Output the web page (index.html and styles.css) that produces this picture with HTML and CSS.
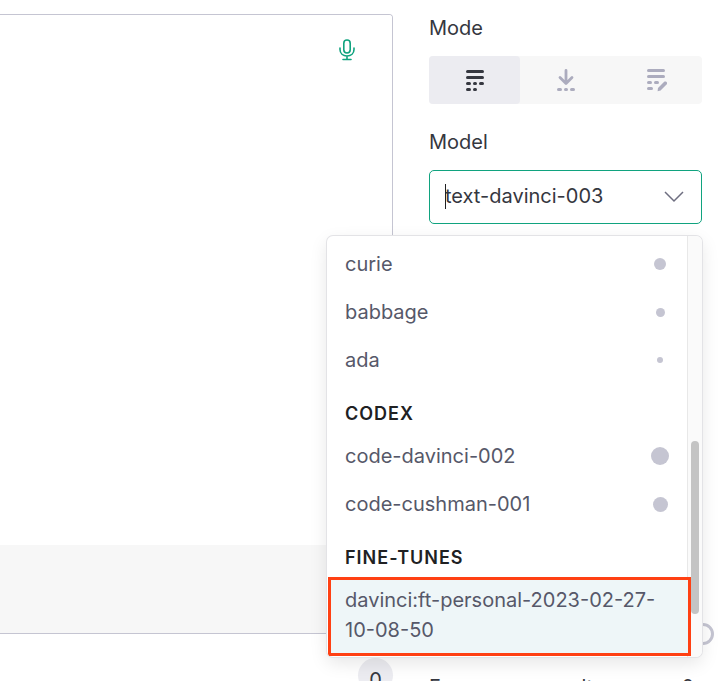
FILE: index.html
```html
<!DOCTYPE html>
<html lang="en">
<head>
<meta charset="utf-8">
<meta name="viewport" content="width=device-width, initial-scale=1">
<title>Playground</title>
<link rel="stylesheet" href="styles.css">
</head>
<body>
<div class="page">
  <main class="workspace">
    <div class="editor">
      <textarea class="prompt" aria-label="Prompt"></textarea>
      <button class="mic" type="button" aria-label="Record audio">
        <svg width="16" height="22" viewBox="0 0 16 22" fill="none" stroke="currentColor" stroke-width="1.6" stroke-linecap="round"><rect x="4.8" y="1" width="6.4" height="13" rx="3.2"/><path d="M1 9v1.500C1 14.500 4 17 8 17s7-2.500 7-6.500V9M8 17v3.500M4 20.500h8"/></svg>
      </button>
      <div class="editor-foot"></div>
    </div>
    <div class="count-row"><span class="count">0</span></div>
  </main>
  <aside class="settings">
    <h2 class="label">Mode</h2>
    <div class="modes">
      <button class="mode mode-active" type="button" aria-label="Complete">
        <svg width="18" height="22" viewBox="0 0 18 22" fill="currentColor"><rect y="1" width="18" height="3" rx="1.500"/><rect y="7" width="18" height="3" rx="1.500"/><rect y="13" width="5" height="3" rx="1.500"/><rect x="7" y="13" width="4" height="3" rx="1.500"/><rect x="13" y="13" width="5" height="3" rx="1.500"/><rect y="19" width="5" height="3" rx="1.500"/><rect x="7" y="19" width="4" height="3" rx="1.500"/></svg>
      </button>
      <button class="mode" type="button" aria-label="Insert">
        <svg width="18" height="22" viewBox="0 0 18 22" fill="currentColor"><path d="M9 1.500v12M3 8.500l6 6 6-6" fill="none" stroke="currentColor" stroke-width="2.800" stroke-linecap="round" stroke-linejoin="round"/><rect y="19" width="5" height="3" rx="1.500"/><rect x="7" y="19" width="4" height="3" rx="1.500"/><rect x="13" y="19" width="5" height="3" rx="1.500"/></svg>
      </button>
      <button class="mode" type="button" aria-label="Edit">
        <svg width="20" height="24" viewBox="0 0 20 24" fill="currentColor"><rect y="1" width="18" height="3" rx="1.500"/><rect y="7" width="18" height="3" rx="1.500"/><rect y="13" width="5" height="3" rx="1.500"/><rect x="7" y="13" width="5" height="3" rx="1.500"/><rect y="19" width="6" height="3" rx="1.500"/><path d="m11 20 6.200-6.300c1.600-1.100 3.800.8 2.600 2.600L13.600 22.500l-3 .8z"/></svg>
      </button>
    </div>
    <label class="label model-label" for="model">Model</label>
    <div class="combo">
      <input class="combo-input" id="model" type="text" value="text-davinci-003">
      <span class="caret"></span>
      <svg class="chevron" width="20" height="12" viewBox="0 0 20 12" fill="none" stroke="currentColor" stroke-width="1.500"><path d="m1 1 9 9 9-9"/></svg>
      <div class="menu">
        <div class="options" role="listbox" aria-label="Models">
          <div class="option" role="option">curie<i class="dot dot-m"></i></div>
          <div class="option" role="option">babbage<i class="dot dot-s"></i></div>
          <div class="option" role="option">ada<i class="dot dot-xs"></i></div>
          <div class="group">CODEX</div>
          <div class="option" role="option">code-davinci-002<i class="dot dot-xl"></i></div>
          <div class="option" role="option">code-cushman-001<i class="dot dot-l"></i></div>
          <div class="group">FINE-TUNES</div>
          <div class="option option-marked" role="option">davinci:ft-personal-2023-02-27-10-08-50</div>
        </div>
        <div class="track"><div class="thumb"></div></div>
      </div>
    </div>
    <div class="slider"><span class="knob"></span></div>
    <p class="label hint"><span>Frequency penalty</span><span>0</span></p>
  </aside>
</div>
</body>
</html>
```
FILE: styles.css
```css
* { box-sizing: border-box; }
body { margin: 0; font-family: Inter, "Liberation Sans", sans-serif; font-size: 20px; line-height: 30px; color: #353740; background: #fff; }
button { border: 0; padding: 0; background: none; color: inherit; }
.page { display: flex; height: 100vh; padding: 14px 24px 0 0; gap: 36px; overflow: hidden; }
.workspace { flex: 1; display: flex; flex-direction: column; }
.editor { position: relative; flex: none; height: calc(100vh - 61px); display: flex; flex-direction: column; border: 1px solid #c5c5d2; border-left: 0; border-radius: 0 4px 4px 0; overflow: hidden; }
.prompt { flex: 1; border: 0; padding: 16px; resize: none; outline: 0; font: inherit; }
.mic { position: absolute; top: 24px; right: 37px; display: flex; color: #10a37f; }
.editor-foot { height: 88px; background: #f7f7f7; }
.count-row { display: flex; justify-content: flex-end; padding-top: 24px; }
.count { width: 35px; height: 35px; flex: none; border-radius: 50%; background: #ececf1; text-align: center; line-height: 44px; }
.settings { width: 273px; flex: none; }
.label { display: block; margin: 0; font-size: 20px; font-weight: 400; line-height: 28px; }
.modes { display: flex; margin: 14px 0 24px; border-radius: 4px; background: #f7f7f7; }
.mode { flex: 1; height: 48px; display: flex; align-items: center; justify-content: center; border-radius: 4px; color: #acacbe; }
.mode-active { background: #ececf1; color: #353740; }
.combo { position: relative; display: flex; margin-top: 14px; }
.combo-input { width: 100%; height: 54px; padding: 0 48px 2px 15px; border: 1px solid #10a37f; border-radius: 5px; outline: 0; font: inherit; color: inherit; }
.caret { position: absolute; left: 16px; top: 14px; width: 1px; height: 25px; background: #202123; }
.chevron { position: absolute; right: 18px; top: 21px; color: #6e6e80; }
.menu { position: absolute; z-index: 2; top: 66px; right: 0; width: 375px; display: flex; border-radius: 6px; background: #fff; box-shadow: 0 0 0 1px #e3e3e6, 0 6px 18px rgba(0, 0, 0, .1); overflow: hidden; }
.options { flex: 1; padding: 4px 0 1px; color: #565869; }
.option { display: flex; align-items: center; justify-content: space-between; padding: 9px 18px; }
.group { padding: 15px 18px 3px; font-size: 18px; font-weight: 600; letter-spacing: 1px; color: #202123; }
.option-marked { position: relative; margin: 1px -4px 0 1px; padding: 5px 14px 8px; border: 3px solid #ff4013; background: #eef6f8; }
.dot { flex: none; border-radius: 50%; background: #c5c5d2; }
.dot-xl { width: 18px; height: 18px; }
.dot-l { width: 15px; height: 15px; margin-right: 1px; }
.dot-m { width: 12px; height: 12px; margin-right: 3px; }
.dot-s { width: 9px; height: 9px; margin-right: 4px; }
.dot-xs { width: 6px; height: 6px; margin-right: 6px; }
.track { width: 15px; flex: none; padding: 205px 3px 0; border-left: 1px solid #e8e8e8; background: #fafafa; }
.thumb { width: 8px; height: 173px; border-radius: 4px; background: #c4c4c4; }
.slider { display: flex; justify-content: flex-end; margin: 399px -12px 0 0; }
.knob { width: 22px; height: 22px; border: 3px solid #c5c5d2; border-radius: 50%; }
.hint { display: flex; justify-content: space-between; margin-top: 28px; padding-right: 8px; white-space: nowrap; }
```
